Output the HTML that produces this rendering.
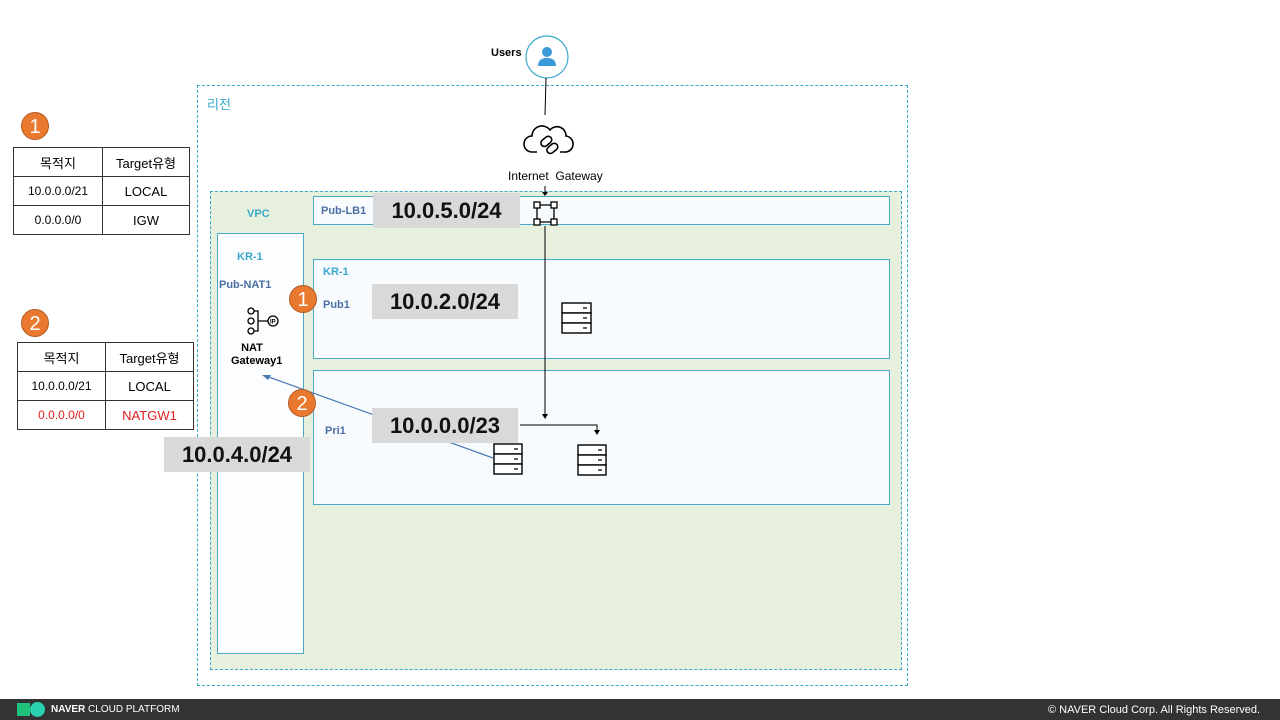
<!DOCTYPE html><html><head><meta charset="utf-8"><style>
body{margin:0;width:1280px;height:720px;position:relative;background:#fff;font-family:"Liberation Sans","Noto Sans CJK KR",sans-serif;overflow:hidden}
.a{position:absolute}
.box{position:absolute;box-sizing:border-box}
.lbl{position:absolute;background:#d9d9d9;font-weight:bold;font-size:22px;color:#111;text-align:center;line-height:35px;z-index:2}
.sm{position:absolute;font-size:11px;font-weight:bold;color:#3aa8cc}
.sm2{position:absolute;font-size:11px;font-weight:bold;color:#4a6fa5}
.oc{position:absolute;width:28px;height:28px;border-radius:50%;background:#e8792f;border:1px solid #b25a20;color:#fff;font-size:20px;text-align:center;line-height:28px;box-sizing:border-box;z-index:3}
table{position:absolute;border-collapse:collapse;font-size:13px}
td{border:1px solid #333;text-align:center;height:28px;padding:0}
</style></head><body>
<div class="box" style="left:197px;top:85px;width:711px;height:601px;border:1px dashed #3aaacb"></div>
<div class="a" style="left:207px;top:94px;font-size:13px;color:#3aa8cc">리전</div>
<div class="box" style="left:210px;top:191px;width:692px;height:479px;border:1px dashed #3aaacb;background:#e6f0dc"></div>
<div class="sm" style="left:247px;top:208px">VPC</div>
<div class="box" style="left:217px;top:233px;width:87px;height:421px;border:1px solid #4aa8c8;background:#fbfdfe"></div>
<div class="sm" style="left:237px;top:251px">KR-1</div>
<div class="sm2" style="left:219px;top:279px">Pub-NAT1</div>
<div class="a" style="left:231px;top:342px;width:42px;text-align:center;font-size:11px;font-weight:bold;line-height:13px">NAT<br>Gateway1</div>
<svg class="a" style="left:246px;top:307px" width="34" height="30"><g fill="none" stroke="#000" stroke-width="1.3"><circle cx="5" cy="4" r="3"/><circle cx="5" cy="14" r="3"/><circle cx="5" cy="24" r="3"/><path d="M8 4h4v20H8M12 14h10"/><circle cx="27" cy="14" r="5"/></g><text x="24" y="16.5" font-size="6" font-weight="bold" font-family="Liberation Sans">IP</text></svg>
<div class="box" style="left:313px;top:196px;width:577px;height:29px;border:1px solid #4aa8c8;background:#f7fbfd"></div>
<div class="sm2" style="left:321px;top:205px">Pub-LB1</div>
<div class="box" style="left:313px;top:259px;width:577px;height:100px;border:1px solid #4aa8c8;background:#f7fbfd"></div>
<div class="sm" style="left:323px;top:266px">KR-1</div>
<div class="sm2" style="left:323px;top:299px">Pub1</div>
<div class="box" style="left:313px;top:370px;width:577px;height:135px;border:1px solid #4aa8c8;background:#f7fbfd"></div>
<div class="sm2" style="left:325px;top:425px">Pri1</div>
<div class="lbl" style="left:373px;top:193px;width:147px">10.0.5.0/24</div>
<div class="lbl" style="left:372px;top:284px;width:146px">10.0.2.0/24</div>
<div class="lbl" style="left:372px;top:408px;width:146px">10.0.0.0/23</div>
<div class="lbl" style="left:164px;top:437px;width:146px">10.0.4.0/24</div>
<div class="oc" style="left:21px;top:112px">1</div>
<div class="oc" style="left:21px;top:309px">2</div>
<div class="oc" style="left:289px;top:285px">1</div>
<div class="oc" style="left:288px;top:389px">2</div>
<table style="left:13px;top:147px;width:177px"><tr><td style="width:88px">목적지</td><td>Target유형</td></tr><tr><td style="font-size:12px">10.0.0.0/21</td><td>LOCAL</td></tr><tr><td style="font-size:12px">0.0.0.0/0</td><td>IGW</td></tr></table>
<table style="left:17px;top:342px;width:177px"><tr><td style="width:87px">목적지</td><td>Target유형</td></tr><tr><td style="font-size:12px">10.0.0.0/21</td><td>LOCAL</td></tr><tr><td style="font-size:12px;color:#e02020">0.0.0.0/0</td><td style="color:#e02020">NATGW1</td></tr></table>
<div class="a" style="left:491px;top:47px;font-size:11px;font-weight:bold">Users</div>
<svg class="a" style="left:0;top:0" width="1280" height="700">
<circle cx="547" cy="57" r="21" fill="#fff" stroke="#3aa8cc" stroke-width="1.2"/>
<circle cx="547" cy="52" r="5" fill="#3a9ad9"/><path d="M538 66q0-8 9-8t9 8z" fill="#3a9ad9"/>
<line x1="546" y1="78" x2="545" y2="115" stroke="#000"/>
<path d="M537 152h-5a8 8 0 0 1 0-16a10 10 0 0 1 18-6a9 9 0 0 1 16 6a7 7 0 0 1 -2 16h-4" fill="none" stroke="#000" stroke-width="1.6"/>
<g fill="none" stroke="#000" stroke-width="1.6"><rect x="540" y="138" width="12" height="7" rx="3.5" transform="rotate(-40 546 141)"/><rect x="546" y="145" width="12" height="7" rx="3.5" transform="rotate(-40 552 148)"/></g>
<path d="M545 186v8" stroke="#000"/><path d="M542 192l3 4 3-4z" fill="#000"/>
<g fill="#fff" stroke="#000" stroke-width="1.3"><path d="M537 205h17v17h-17z" fill="none"/><rect x="534" y="202" width="6" height="6"/><rect x="551" y="202" width="6" height="6"/><rect x="534" y="219" width="6" height="6"/><rect x="551" y="219" width="6" height="6"/></g>
<path d="M545 226v190" stroke="#000"/><path d="M542 414l3 5 3-5z" fill="#000"/>
<path d="M520 425h77v7" fill="none" stroke="#000"/><path d="M594 430l3 5 3-5z" fill="#000"/>
<path d="M493 458L266 376" stroke="#4a7ab5" stroke-width="1.2"/><path d="M262 375l9 0-3 5z" fill="#4a7ab5"/>
<g fill="#fff" stroke="#000" stroke-width="1.4">
<rect x="562" y="303" width="29" height="10"/><rect x="562" y="313" width="29" height="10"/><rect x="562" y="323" width="29" height="10"/>
<rect x="494" y="444" width="28" height="10"/><rect x="494" y="454" width="28" height="10"/><rect x="494" y="464" width="28" height="10"/>
<rect x="578" y="445" width="28" height="10"/><rect x="578" y="455" width="28" height="10"/><rect x="578" y="465" width="28" height="10"/></g>
<g stroke="#000" stroke-width="1.2"><path d="M583 308h4M583 318h4M583 328h4M514 449h4M514 459h4M514 469h4M598 450h4M598 460h4M598 470h4"/></g>
</svg>
<div class="a" style="left:508px;top:169px;font-size:12px">Internet&nbsp; Gateway</div>
<div class="a" style="left:0;top:699px;width:1280px;height:21px;background:#333"></div>
<div class="a" style="left:17px;top:703px;width:13px;height:13px;background:#1ec27a"></div>
<div class="a" style="left:30px;top:702px;width:15px;height:15px;border-radius:50%;background:#2ad0b0"></div>
<div class="a" style="left:51px;top:704px;color:#fff;font-size:10px;line-height:12px"><b>NAVER</b> CLOUD PLATFORM</div>
<div class="a" style="left:1048px;top:703px;color:#fff;font-size:11px;line-height:14px">© NAVER Cloud Corp. All Rights Reserved.</div>
</body></html>
